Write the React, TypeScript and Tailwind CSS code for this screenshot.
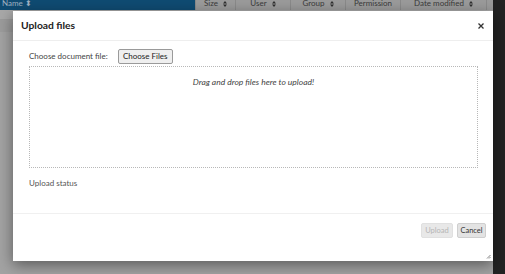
const cols = [
  { label: 'Size', w: 'w-[40px]' },
  { label: 'User', w: 'w-[55px]' },
  { label: 'Group', w: 'w-[55px]' },
  { label: 'Permission', w: 'w-[55px]', noSort: true },
  { label: 'Date modified', w: 'w-[86px]' },
];

function SortIcon() {
  return (
    <svg width="4" height="6" viewBox="0 0 4 6" className="inline-block ml-[5px]">
      <path d="M2 0 L4 2.5 H0 Z M0 3.5 H4 L2 6 Z" fill="#2e2e2e" />
    </svg>
  );
}

export default function App() {
  return (
    <div
      className="relative w-[505px] h-[274px] overflow-hidden bg-[#a1a1a1] text-[#333]"
      style={{ fontFamily: 'Lato, "Open Sans", sans-serif' }}
    >
      {/* Background page (dimmed) */}
      <div className="flex h-full">
        <div className="flex flex-col w-[493px]">
          <div className="flex h-[10px] text-[8px] leading-none">
            <div className="w-[195px] bg-[#0f4b72] text-[#9fb2c2] pl-[2px] flex items-end overflow-hidden">
              <span className="mb-[3px]">Name ⬍</span>
            </div>
            {cols.map((c) => (
              <div
                key={c.label}
                className={`${c.w} bg-[#9b9b9b] border-l border-[#8a8a8a] flex items-end justify-center overflow-hidden text-[#3a3a3a]`}
              >
                <span className="mb-[3px] whitespace-nowrap">
                  {c.label}
                  {!c.noSort && <SortIcon />}
                </span>
              </div>
            ))}
            <div className="flex-1 bg-[#9b9b9b] border-l border-[#8a8a8a]" />
          </div>
          <div className="h-[10px] bg-[#a8a8a8] border-b border-[#9a9a9a]" />
          <div className="h-[12px] bg-[#9c9c9c]" />
          <div className="flex-1 bg-[#a3a3a3]" />
        </div>
        <div className="flex-1 bg-[#232323]" />
      </div>

      {/* Modal */}
      <div className="absolute left-[13px] top-[11px] w-[480px] h-[250px] bg-white flex flex-col shadow-[0_4px_14px_rgba(0,0,0,0.45)]">
        <div className="h-[30px] flex items-center justify-between pl-[8px] pr-[9px] border-b border-[#eeeeee]">
          <span className="text-[10.3px] font-bold text-[#222]">Upload files</span>
          <svg width="6" height="6" viewBox="0 0 6 6">
            <path d="M0.5 0.5 L5.5 5.5 M5.5 0.5 L0.5 5.5" stroke="#333" strokeWidth="1.3" />
          </svg>
        </div>
        <div className="flex-1 flex flex-col px-[16px] pt-[7px] text-[8px] text-[#444]">
          <div className="flex items-center h-[16px]">
            <span className="mr-[10px]">Choose document file:</span>
            <button className="h-[15px] w-[55px] text-[8px] leading-none text-[#222] bg-[#efefef] border border-[#9a9a9a] rounded-[2px]">
              Choose Files
            </button>
          </div>
          <div className="mt-[2px] h-[102px] w-[449px] border border-dotted border-[#b8b8b8] flex justify-center pt-[9px]">
            <span className="italic text-[#444] text-[8.5px]">Drag and drop files here to upload!</span>
          </div>
          <div className="mt-[8px] h-[14px] flex items-center text-[#555]">Upload status</div>
        </div>
        <div className="h-[48px] border-t border-[#f0f0f0] flex justify-end items-start pt-[9px] pr-[7px] gap-[4px]">
          <button className="h-[15px] w-[32px] text-[7.5px] text-[#b5b5b5] bg-[#e8e8e8] border border-[#e0e0e0] rounded-[2px] leading-none">
            Upload
          </button>
          <button className="h-[15px] w-[29px] text-[7.5px] text-[#333] bg-[#e3e3e3] border border-[#cfcfcf] rounded-[2px] leading-none">
            Cancel
          </button>
        </div>
        <svg width="5" height="5" viewBox="0 0 5 5" className="absolute right-[2px] bottom-[2px]">
          <path d="M4.5 1 L1 4.5 M4.5 3 L3 4.5" stroke="#666" strokeWidth="0.8" />
        </svg>
      </div>
    </div>
  );
}
